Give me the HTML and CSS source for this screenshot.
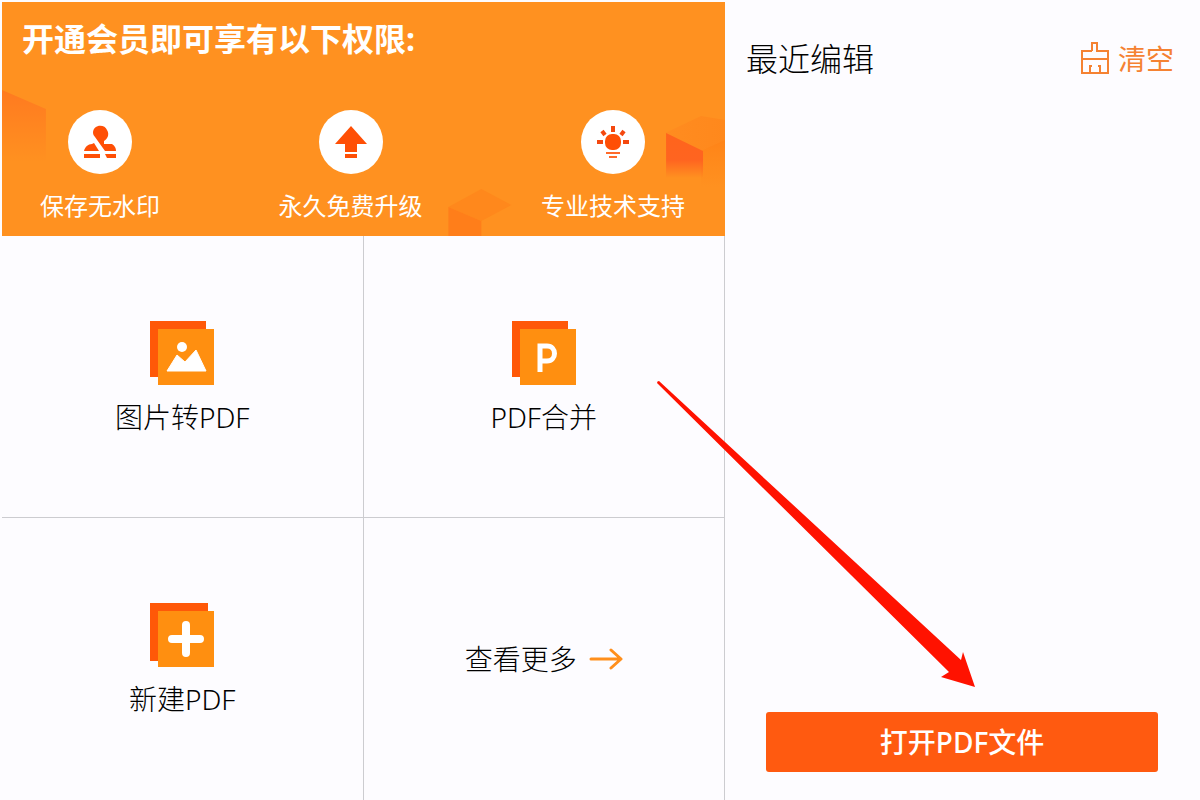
FILE: index.html
```html
<!DOCTYPE html>
<html lang="zh-CN">
<head>
  <meta charset="UTF-8">
  <meta name="viewport" content="width=device-width, initial-scale=1.0">
  <title>PDF</title>
  <link rel="stylesheet" href="styles.css">
</head>
<body>
  <div class="app">
    <!-- 左侧 -->
    <main class="main">
      <section class="banner">
        <svg class="banner-bg" viewBox="0 0 724 234" preserveAspectRatio="none" aria-hidden="true">
          <defs>
            <linearGradient id="fadeLeft" x1="0" y1="0" x2="0" y2="1">
              <stop offset="0" stop-color="#ff7a20"/>
              <stop offset="1" stop-color="#ff7a20" stop-opacity="0"/>
            </linearGradient>
            <linearGradient id="fadeRight" x1="0" y1="0" x2="0" y2="1">
              <stop offset="0" stop-color="#ff641c"/>
              <stop offset="0.6" stop-color="#ff6420"/>
              <stop offset="1" stop-color="#ff6420" stop-opacity="0"/>
            </linearGradient>
            <linearGradient id="fadeTop" x1="0" y1="0" x2="1" y2="0">
              <stop offset="0" stop-color="#ff8c20"/>
              <stop offset="1" stop-color="#ff881c"/>
            </linearGradient>
            <linearGradient id="fadeSide" x1="0" y1="0" x2="0" y2="1">
              <stop offset="0" stop-color="#ff8418"/>
              <stop offset="1" stop-color="#ff8418" stop-opacity="0"/>
            </linearGradient>
          </defs>
          <path d="M0 88L44 107V160H0z" fill="url(#fadeLeft)"/>
          <path d="M664 131L700 114L724 118V140L700 149z" fill="url(#fadeTop)"/>
          <path d="M700 149L724 138V185H700z" fill="url(#fadeSide)"/>
          <path d="M665 131L702 149V176H665z" fill="url(#fadeRight)"/>
          <path d="M447 205L480 187L510 203L480 219z" fill="#ff881c"/>
          <path d="M447 205L480 219V234H447z" fill="#ff7e1a"/>
        </svg>
        <h1 class="banner-title">开通会员即可享有以下权限:</h1>
        <ul class="benefits">
          <li class="benefit">
            <span class="benefit-icon">
              <svg width="64" height="64" viewBox="0 0 64 64" fill="#ff4f05" aria-hidden="true">
                <path d="M25 23C25 14 37 14 39 20C42 25 39 29 36 31V34H44C47 36 48 38 48 41H37L27 27Q25 25 25 23z"/>
                <path d="M16 41C17 37 20 34 24 34L26 33L31 41z"/>
                <path d="M16 44H32V48H16zM37 44H48V48H39z"/>
              </svg>
            </span>
            <span class="benefit-text">保存无水印</span>
          </li>
          <li class="benefit">
            <span class="benefit-icon">
              <svg width="64" height="64" viewBox="0 0 64 64" fill="#ff4f05" aria-hidden="true">
                <path d="M32 16L48 34H38V42H26V34H16z"/>
                <path d="M26 44H38V48H26z"/>
              </svg>
            </span>
            <span class="benefit-text">永久免费升级</span>
          </li>
          <li class="benefit">
            <span class="benefit-icon">
              <svg width="64" height="64" viewBox="0 0 64 64" fill="#ff4f05" aria-hidden="true">
                <rect x="24" y="24" width="16" height="16" rx="7"/>
                <path d="M32 16V22M21 21L24 25M43 21L40 25M16 32H22M42 32H48" stroke="#f4480f" stroke-width="4"/>
                <path d="M25 43H39M28 47H36" stroke="#ff6a2a" stroke-width="2"/>
              </svg>
            </span>
            <span class="benefit-text">专业技术支持</span>
          </li>
        </ul>
      </section>

      <!-- 功能 -->
      <nav class="tiles">
        <a class="tile" href="#image">
          <svg width="64" height="64" viewBox="0 0 64 64" aria-hidden="true">
            <path d="M0 0H56V8H8V56H0z" fill="#ff5808"/>
            <path d="M8 8H64V64H8z" fill="#ff8f10"/>
            <circle cx="32" cy="26" r="5" fill="#fff"/>
            <path d="M17 50L27 34L35 41L46 29L56 50z" fill="#fff" stroke="#fff" stroke-width="1" stroke-linejoin="round"/>
          </svg>
          <span>图片转PDF</span>
        </a>
        <a class="tile" href="#merge">
          <svg width="64" height="64" viewBox="0 0 64 64" aria-hidden="true">
            <path d="M0 0H56V8H8V56H0z" fill="#ff5808"/>
            <path d="M8 8H64V64H8z" fill="#ff8f10"/>
            <path d="M28 51V25H35C45 25 45 40 35 40H28" fill="none" stroke="#fff" stroke-width="5"/>
          </svg>
          <span>PDF合并</span>
        </a>
        <a class="tile" href="#new">
          <svg width="64" height="64" viewBox="0 0 64 64" aria-hidden="true">
            <path d="M0 0H58V8H8V58H0z" fill="#ff5808"/>
            <path d="M8 8H64V64H8z" fill="#ff8f10"/>
            <path d="M36 22V50M22 36H50" stroke="#fff" stroke-width="8" stroke-linecap="round"/>
          </svg>
          <span>新建PDF</span>
        </a>
        <a class="tile tile-more" href="#more">
          <span>查看更多</span>
          <svg width="34" height="24" viewBox="0 0 34 24" fill="none" stroke="#ff8f1c" stroke-width="3" stroke-linecap="round" stroke-linejoin="round" aria-hidden="true">
            <path d="M2 12H31M22 3L32 12L22 21"/>
          </svg>
        </a>
      </nav>
    </main>

    <!-- 右侧 -->
    <aside class="recent">
      <div class="recent-head">
        <h2 class="recent-title">最近编辑</h2>
        <button class="clear-btn" type="button">
          <svg width="30" height="34" viewBox="0 0 30 34" fill="none" stroke="#f58232" stroke-width="2" aria-hidden="true">
            <path d="M12 9V1H17V9H28V31H2V9H12M2 17H28M10 31V23M20 31V23M10 24H12M18 24H20"/>
          </svg>
          <span>清空</span>
        </button>
      </div>
      <button class="open-btn" type="button">打开PDF文件</button>
    </aside>

    <!-- 指向打开按钮的箭头 -->
    <svg class="pointer" width="320" height="308" viewBox="0 0 320 308" fill="#ff1200" aria-hidden="true">
      <path d="M2 0L304 279L306 271L318 306L284 296L292 291L0 2Q0 0 2 0z"/>
    </svg>
  </div>
</body>
</html>
```
FILE: styles.css
```css
* {
  box-sizing: border-box;
}

body {
  margin: 0;
  font-family: "Noto Sans", "Noto Sans CJK SC", sans-serif;
  font-size: 28px;
  font-weight: 300;
  line-height: 32px;
  color: #000;
  background-color: #fdfcff;
}

h1,
h2,
ul {
  margin: 0;
  padding: 0;
}

button {
  border: none;
  background: none;
  padding: 0;
  font: inherit;
  cursor: pointer;
}

.app {
  position: relative;
  display: grid;
  grid-template-columns: 723fr 475fr;
  min-height: 100vh;
  padding: 2px 0 0 2px;
}

.main {
  display: flex;
  flex-direction: column;
}

/* 会员横幅 */
.banner {
  position: relative;
  padding: 17px 40px 14px 38px;
  background-color: #ff9120;
  color: #fff;
}

.banner-bg {
  position: absolute;
  inset: 0;
  width: 100%;
  height: 100%;
}

.banner-title {
  position: relative;
  margin: 0 0 51px -18px;
  font-size: 32px;
  font-weight: 700;
  line-height: 40px;
}

.benefits {
  position: relative;
  display: flex;
  justify-content: space-between;
  list-style: none;
}

.benefit {
  display: flex;
  flex-direction: column;
  align-items: center;
  gap: 16px;
}

.benefit-icon {
  width: 64px;
  height: 64px;
  border-radius: 50%;
  background-color: #fff;
}

.benefit-icon svg {
  display: block;
}

.benefit-text {
  font-size: 24px;
  font-weight: 400;
}

/* 功能格子 */
.tiles {
  flex: 1;
  display: grid;
  grid-template-columns: 1fr 1fr;
  grid-template-rows: 1fr 1fr;
}

.tile {
  display: flex;
  flex-direction: column;
  align-items: center;
  justify-content: center;
  gap: 16px;
  border-right: 1px solid #ccccd0;
  color: inherit;
  text-decoration: none;
}

.tile:nth-child(-n+2) {
  border-bottom: 1px solid #ccccd0;
}

.tile svg {
  display: block;
}

.tile-more {
  flex-direction: row;
  gap: 12px;
}

/* 最近编辑 */
.recent {
  display: flex;
  flex-direction: column;
  justify-content: space-between;
  padding: 35px 26px 28px 21px;
}

.recent-head {
  display: flex;
  justify-content: space-between;
  align-items: center;
}

.recent-title {
  font-size: 32px;
  font-weight: 300;
  line-height: 44px;
}

.clear-btn {
  display: flex;
  align-items: center;
  gap: 8px;
  color: #f58232;
  font-weight: 400;
}

.open-btn {
  height: 60px;
  margin: 0 16px 0 20px;
  border-radius: 3px;
  background-color: #ff5a10;
  color: #fff;
  font-weight: 500;
}

.pointer {
  position: absolute;
  left: 657px;
  top: 381px;
  pointer-events: none;
}
```
